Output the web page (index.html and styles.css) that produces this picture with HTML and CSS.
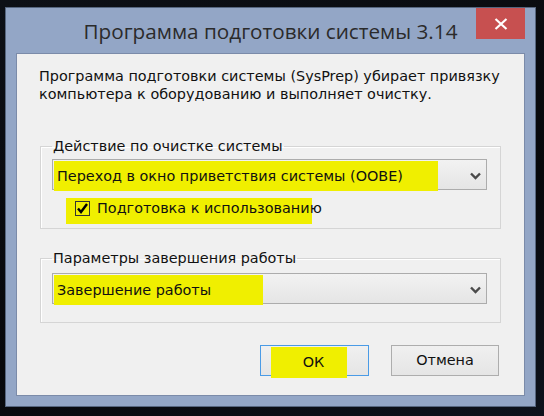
FILE: index.html
```html
<!DOCTYPE html>
<html lang="ru">
<head>
    <meta charset="UTF-8">
    <title>Программа подготовки системы 3.14</title>
    <link rel="stylesheet" href="styles.css">
</head>
<body>

    <div class="window">
        <div class="titlebar">
            <span class="title">Программа подготовки системы 3.14</span>
            <button class="close-btn" title="Закрыть">
                <svg width="14" height="12" viewBox="0 0 14 12"><path d="M1.5 1 L12.5 11 M12.5 1 L1.5 11" stroke="#fff" stroke-width="2.2" fill="none"/></svg>
            </button>
        </div>

        <div class="content">
            <p class="intro">Программа подготовки системы (SysPrep) убирает привязку<br>компьютера к оборудованию и выполняет очистку.</p>

            <!-- Cleanup action -->
            <fieldset class="group">
                <legend>Действие по очистке системы</legend>
                <div class="combo">
                    <mark class="hl hl-action">Переход в окно приветствия системы (OOBE)</mark>
                    <svg class="arrow" width="11" height="8" viewBox="0 0 11 8"><path d="M1 1.5 L5.5 6 L10 1.5" stroke="#4a4a4a" stroke-width="2.4" fill="none"/></svg>
                </div>
                <label class="check hl">
                    <span class="box"><svg width="13" height="13" viewBox="0 0 13 13"><path d="M2 6.5 L5 10 L11 2" stroke="#000" stroke-width="2.4" fill="none"/></svg></span>
                    Подготовка к использованию
                </label>
            </fieldset>

            <!-- Shutdown options -->
            <fieldset class="group group-shutdown">
                <legend>Параметры завершения работы</legend>
                <div class="combo">
                    <mark class="hl hl-shutdown">Завершение работы</mark>
                    <svg class="arrow" width="11" height="8" viewBox="0 0 11 8"><path d="M1 1.5 L5.5 6 L10 1.5" stroke="#4a4a4a" stroke-width="2.4" fill="none"/></svg>
                </div>
            </fieldset>

            <div class="buttons">
                <button class="btn btn-default"><mark class="hl hl-ok">ОК</mark></button>
                <button class="btn">Отмена</button>
            </div>
        </div>
    </div>

</body>
</html>
```

FILE: styles.css
```css
* {
    box-sizing: border-box;
}

body {
    margin: 0;
    width: 544px;
    height: 416px;
    overflow: hidden;
    background: linear-gradient(160deg, #0d1016 0%, #07080b 60%, #0d121c 100%);
    font-family: "DejaVu Sans", sans-serif;
    font-size: 14.4px;
    line-height: 18px;
    color: #111;
}

.window {
    margin: 7px 0 0 5px;
    width: 531px;
    height: 400px;
    background: #93a6c6;
    border: 1px solid #56667f;
    padding: 0 10px 10px;
    display: flex;
    flex-direction: column;
}

.titlebar {
    display: grid;
    grid-template-columns: 1fr auto 1fr;
    height: 45px;
}

.title {
    grid-column: 2;
    margin-top: 9px;
    font-family: "Open Sans", sans-serif;
    font-size: 20.7px;
    line-height: 28px;
    color: #2b2b2b;
    white-space: nowrap;
}

.close-btn {
    grid-column: 3;
    justify-self: end;
    width: 49px;
    height: 31px;
    padding: 0;
    border: none;
    background: #c75050;
    display: flex;
    align-items: center;
    justify-content: center;
}

.content {
    flex: 1;
    background: #f0f0f0;
    border: 1px solid #7b8ba9;
}

.intro {
    margin: 0;
    padding: 13px 0 0 22px;
    white-space: nowrap;
}

.group {
    margin: 34px 23px 0;
    padding: 4px 13px 4px 11px;
    border: 1px solid #d5d5d5;
    box-shadow: inset 1px 1px 0 #fff;
    min-width: 0;
}

.group legend {
    padding: 0 1px;
    margin-left: 0;
}

.group-shutdown {
    margin-top: 20px;
    padding-top: 6px;
    padding-bottom: 18px;
}

.combo {
    display: flex;
    align-items: flex-start;
    height: 31px;
    padding: 1px 0 0 1px;
    border: 1px solid #acacac;
    background: linear-gradient(#f2f2f2, #e5e5e5);
}

.arrow {
    margin: 11px 5px 0 auto;
}

.hl {
    background: #f0ef00;
    color: inherit;
}

.combo .hl {
    display: inline-block;
    height: 30px;
    line-height: 30px;
    padding-left: 3px;
    white-space: nowrap;
}

.hl-action {
    width: 384px;
}

.hl-shutdown {
    width: 209px;
}

.check {
    display: flex;
    align-items: center;
    gap: 7px;
    width: 246px;
    margin: 8px 0 0 14px;
    padding: 1px 0 7px 9px;
    white-space: nowrap;
}

.box {
    width: 15px;
    height: 15px;
    border: 1px solid #333;
    display: flex;
    align-items: center;
    justify-content: center;
    flex-shrink: 0;
}

.buttons {
    display: flex;
    justify-content: flex-end;
    gap: 22px;
    margin-top: 22px;
    padding-right: 25px;
}

.btn {
    width: 108px;
    height: 31px;
    padding: 0;
    border: 1px solid #adadad;
    background: linear-gradient(#f0f0f0, #e5e5e5);
    font: inherit;
    line-height: 29px;
    color: #111;
}

.btn-default {
    width: 109px;
    border-color: #4a9be6;
    display: flex;
    align-items: flex-start;
    padding: 1px 0 0 10px;
}

.hl-ok {
    display: block;
    width: 76px;
    height: 31px;
    line-height: 30px;
    padding-left: 9px;
    text-align: center;
}
```
